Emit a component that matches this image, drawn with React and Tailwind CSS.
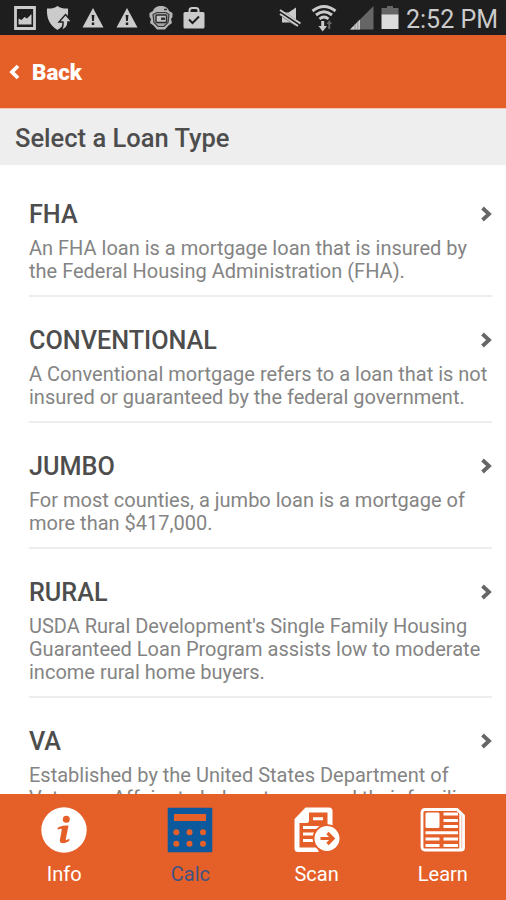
import React, { useState } from 'react';

const LOANS = [
  { name: 'FHA', lines: ['An FHA loan is a mortgage loan that is insured by', 'the Federal Housing Administration (FHA).'] },
  { name: 'CONVENTIONAL', lines: ['A Conventional mortgage refers to a loan that is not', 'insured or guaranteed by the federal government.'] },
  { name: 'JUMBO', lines: ['For most counties, a jumbo loan is a mortgage of', 'more than $417,000.'] },
  { name: 'RURAL', lines: ["USDA Rural Development's Single Family Housing", 'Guaranteed Loan Program assists low to moderate', 'income rural home buyers.'] },
  { name: 'VA', lines: ['Established by the United States Department of', 'Veterans Affairs to help veterans and their families'] },
];

function WarningIcon({ className }) {
  return (
    <svg width="22" height="22" viewBox="0 0 22 22" className={className}>
      <path d="M11 1 21.500 20.500H.5Z" fill="#cbcbcb" />
      <path d="M9.600 8h2.800l-.5 6h-1.800ZM9.800 15.500h2.400v2.400H9.800Z" fill="#1e1e1e" />
    </svg>
  );
}

function StatusBar() {
  return (
    <div className="flex h-[35px] shrink-0 items-center justify-between bg-[#1e1e1e] pl-[14px] pr-[7px]">
      <div className="flex items-center">
        <svg width="22" height="24" viewBox="0 0 22 24">
          <path d="M1.500 1.500h19v21h-19Z" fill="none" stroke="#cbcbcb" strokeWidth="2.800" />
          <path d="M4.500 18.500v-6l3 1.500 3-3 2.500 1.500 4.500-4.500v10.500Z" fill="#cbcbcb" />
        </svg>
        <svg width="26" height="26" viewBox="0 0 26 26" className="ml-[10px]">
          <path d="M11.500 1c3 2 6.500 2.800 10.500 2.500.6 8.500-1.500 16-10.500 21.500C3 20 .5 12.500 1 3.500 5 3.800 8.500 3 11.500 1Z" fill="#cbcbcb" />
          <path d="M19.500 9.500 26 17h-4c0 4-2 7.500-7.500 8.500 2-2 2.800-5 2.500-8.500H13Z" fill="#cbcbcb" stroke="#1e1e1e" strokeWidth="1.400" />
        </svg>
        <WarningIcon className="ml-[10px]" />
        <WarningIcon className="ml-[12px]" />
        <svg width="26" height="26" viewBox="0 0 26 26" className="ml-[10px]">
          <path d="M5 6C6 2.500 9 1 13 1s7 1.500 8 5l3.500 2v4L23 14l1 4-3.500 2.500L17 24.500H9L5.500 20.500 2 18l1-4-1.500-2V8Z" fill="#b5b5b5" />
          <path d="M5 9.500 9 7.500h9l3 2-1 8-4 4h-6l-4-4Z" fill="#a2a2a2" stroke="#3a3a3a" strokeWidth="1.200" />
          <path d="M16 4.500h3" stroke="#333" strokeWidth="1.500" />
          <rect x="8" y="10" width="10.500" height="7.500" rx="1" fill="#c4c4c4" stroke="#2b2b2b" strokeWidth="1.400" />
          <path d="M13 12.500h4v2.500h-4Z" fill="#333" />
        </svg>
        <svg width="22" height="24" viewBox="0 0 22 24" className="ml-[9px]">
          <path d="M6.500 7V4.500Q6.500 2 9 2h4q2.500 0 2.500 2.500V7" fill="none" stroke="#cbcbcb" strokeWidth="2" />
          <rect x=".5" y="6" width="21" height="16.500" rx="1.500" fill="#cbcbcb" />
          <path d="m6 13.500 3.500 3.500 6.500-6.500" fill="none" stroke="#1e1e1e" strokeWidth="2" />
        </svg>
      </div>
      <div className="flex items-center">
        <svg width="24" height="24" viewBox="0 0 24 24">
          <path d="M3 6.500h6.500l7.500-5V20l-6-3.500H3Z" fill="#cbcbcb" />
          <path d="m0 5.500 21 14" stroke="#1e1e1e" strokeWidth="5.500" />
          <path d="m1 4 20.500 13.500M1 8l18 12" stroke="#cbcbcb" strokeWidth="2" />
        </svg>
        <svg width="26" height="28" viewBox="0 0 26 28" className="ml-[8px]">
          <g fill="none" stroke="#cbcbcb" strokeWidth="2.900">
            <path d="M1.500 7q11.500-9 23 0" />
            <path d="M5 11q8-6.500 16 0" />
            <path d="M8.500 15q4.500-4 9 0" />
          </g>
          <path d="M10.200 17h3v5H16l-4.300 5.500L7.500 22h2.700Z" fill="#cbcbcb" />
          <path d="M17.200 25v-5h-1.700l2.700-4 2.800 4h-1.800v5Z" fill="#666" />
        </svg>
        <svg width="25" height="25" viewBox="0 0 25 25" className="ml-[12px]">
          <path d="M24.500 1v23.500H1Z" fill="#666" />
          <path d="M11 14.500v10H1Z" fill="#cbcbcb" />
          <path d="M6 19v6M8.800 16v9" stroke="#777" strokeWidth=".7" />
        </svg>
        <svg width="18" height="25" viewBox="0 0 18 25" className="ml-[7px]">
          <path d="M6 1h6v2h5.500v7H.5V3H6Z" fill="#666" />
          <path d="M.5 9.500h17v14.500H.5Z" fill="#dcdcdc" />
        </svg>
        <span className="ml-[7px] w-[93px] whitespace-nowrap pt-[3px] text-[25px] leading-none text-[#cbcbcb]">2:52 PM</span>
      </div>
    </div>
  );
}

function LoanRow({ loan }) {
  return (
    <button className="block w-full shrink-0 border-b-2 border-[#ededed] pt-[30px] pb-[12px] text-left">
      <div className="flex h-[28px] items-center justify-between">
        <h2 className="text-[25.200px] font-medium text-[#4d4d4d]">{loan.name}</h2>
        <svg width="12" height="16" viewBox="0 0 12 16" className="mb-[3px]">
          <path d="m2.500 2 6.500 6-6.500 6" fill="none" stroke="#666" strokeWidth="3.800" />
        </svg>
      </div>
      <div className="pt-[8px] text-[20px] leading-[23px] text-[#848484]">
        {loan.lines.map(line => (
          <p key={line} className="whitespace-nowrap">{line}</p>
        ))}
      </div>
    </button>
  );
}

function InfoIcon() {
  return (
    <svg width="46" height="46" viewBox="0 0 46 46">
      <circle cx="23" cy="23" r="22.700" fill="#fff" />
      <circle cx="25.300" cy="12.300" r="3.500" fill="#e55f29" />
      <path d="M16.500 21c2-2 7.500-3 11-2.200L24.800 32c-.2 1.500 1.500 1.200 3.500-.2l.3 1.500c-2.500 3.200-10.500 4.300-9.800 0L20.800 22.500c.1-1.200-2-1.200-4 .3Z" fill="#e55f29" />
    </svg>
  );
}

function CalcIcon() {
  return (
    <svg width="46" height="46" viewBox="0 0 46 46">
      <rect x=".7" y=".7" width="44.600" height="44.600" rx="1" fill="#0d599d" />
      <path d="M7 7h32v7H7Z" fill="#e55f29" />
      <g fill="#e55f29">
        {[9.300, 22.500, 36].map(x => (
          <React.Fragment key={x}>
            <circle cx={x} cy="25.300" r="3" />
            <circle cx={x} cy="36.700" r="3" />
          </React.Fragment>
        ))}
      </g>
    </svg>
  );
}

function ScanIcon() {
  return (
    <svg width="46" height="46" viewBox="0 0 46 46">
      <path d="M11.500.5H35q3.500 0 3.500 3.500V45H4q-3.500 0-3.500-3.500V12Z" fill="#fff" />
      <path d="M15 5.500H33.500V40.500H5.500V16H12.500Q15 16 15 13.500Z" fill="#e55f29" />
      <path d="M19 11.700h10M9 20.500h20M9 27h14M9 33.500h11" stroke="#fff" strokeWidth="3" />
      <path d="M33 17.500a14 14 0 0 0-9 25L25 46H46V22Z" fill="#e55f29" />
      <circle cx="33" cy="31.500" r="14.300" fill="#e55f29" />
      <circle cx="33" cy="31.500" r="12.500" fill="#fff" />
      <path d="M26.500 31.500H38M33.500 26l5.500 5.500-5.500 5.500" fill="none" stroke="#e55f29" strokeWidth="3.200" />
    </svg>
  );
}

function LearnIcon() {
  return (
    <svg width="46" height="46" viewBox="0 0 46 46">
      <path d="M5 2.500H37L43.500 8.500V41Q43.500 43 41 43H5Q2 43 2 40V5.500Q2 2.500 5 2.500Z" fill="none" stroke="#fff" strokeWidth="2.800" />
      <path d="M40.500 5v37" stroke="#fff" strokeWidth="2.400" />
      <rect x="5.500" y="5.500" width="14" height="15.500" rx="1.500" fill="#fff" />
      <path d="M23.500 7H38M23.500 13.500H38M23.500 19.500H38M5.500 25.800H38M5.500 32h14M23.500 32H38M5.500 38.500h14M23.500 38.500H38" stroke="#fff" strokeWidth="3" />
    </svg>
  );
}

const TABS = [
  { label: 'Info', icon: InfoIcon },
  { label: 'Calc', icon: CalcIcon },
  { label: 'Scan', icon: ScanIcon },
  { label: 'Learn', icon: LearnIcon },
];

export default function App() {
  const [activeTab, setActiveTab] = useState('Calc');

  return (
    <div className="flex h-[900px] w-[506px] flex-col overflow-hidden bg-white font-['Roboto',sans-serif]">
      <StatusBar />

      <header className="flex h-[73px] shrink-0 items-center bg-[#e55f29] pl-[8px] pt-[3px] text-white">
        <button className="flex items-center">
          <svg width="12" height="16" viewBox="0 0 12 16" className="mb-[2px]">
            <path d="M10 2 4 8l6 6" fill="none" stroke="currentColor" strokeWidth="3.800" />
          </svg>
          <span className="ml-[12px] text-[22.300px] font-black">Back</span>
        </button>
      </header>

      <div className="flex h-[57px] shrink-0 items-center border-t border-[#f5c9b5] bg-[#eeeeee] pl-[15px] pt-[2px]">
        <h1 className="text-[25.500px] font-medium text-[#4d4d4d]">Select a Loan Type</h1>
      </div>

      {/* Loan types */}
      <main className="flex min-h-0 flex-1 flex-col overflow-hidden pl-[29px] pr-[14px] pt-[6px]">
        {LOANS.map(loan => (
          <LoanRow key={loan.name} loan={loan} />
        ))}
      </main>

      {/* Bottom tabs */}
      <nav className="grid h-[106px] shrink-0 grid-cols-4 bg-[#e55f29] pl-[1px]">
        {TABS.map(({ label, icon: Icon }) => (
          <button
            key={label}
            onClick={() => setActiveTab(label)}
            className={`flex flex-col items-center pt-[13px] ${activeTab === label ? 'text-[#3f5484]' : 'text-white'}`}
          >
            <Icon />
            <span className="mt-[7px] text-[20px] leading-[28px]">{label}</span>
          </button>
        ))}
      </nav>
    </div>
  );
}
